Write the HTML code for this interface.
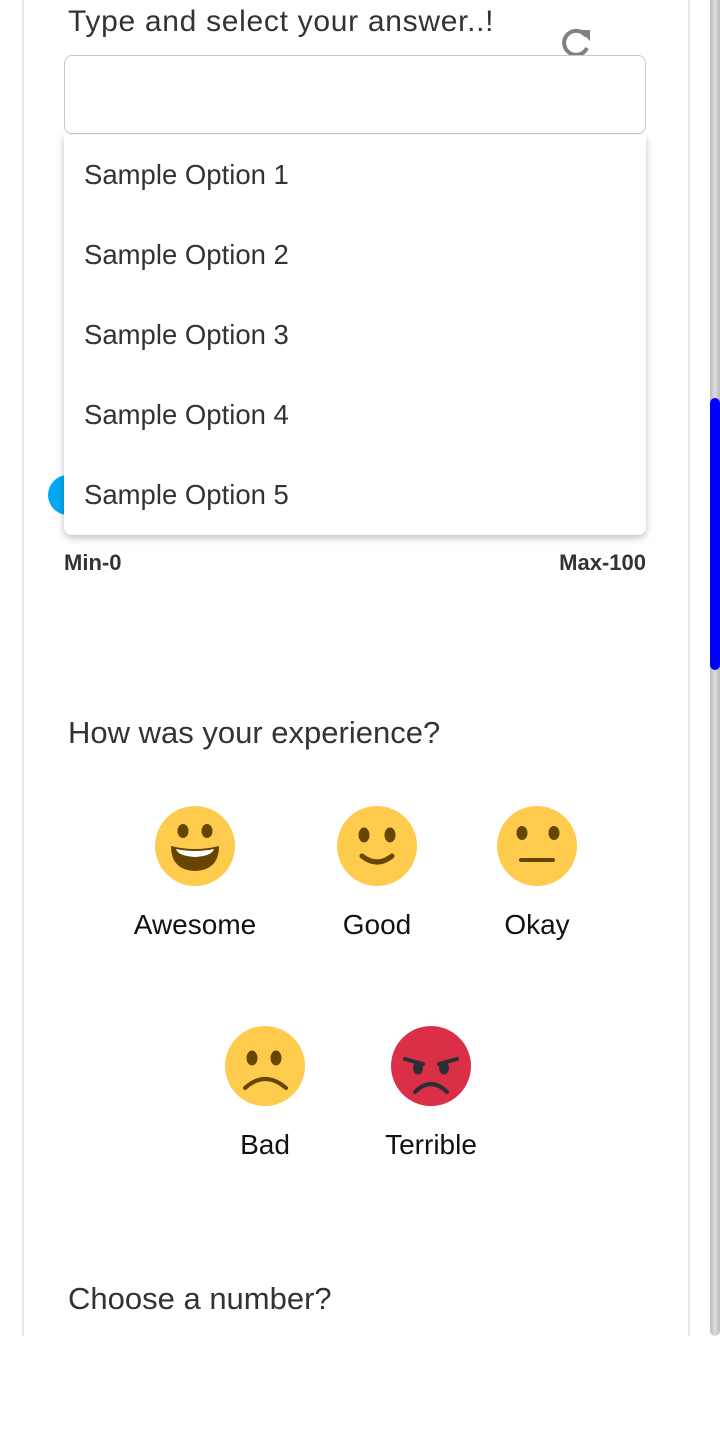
<!DOCTYPE html>
<html><head><style>
body{margin:0;width:720px;height:1448px;background:#fff;position:relative;overflow:hidden;font-family:"Liberation Sans",Roboto,sans-serif;}
.card{position:absolute;left:22px;top:-10px;width:664px;height:1346px;border-left:2px solid #e6e6e6;border-right:2px solid #e6e6e6;}
.t{position:absolute;color:#333;font-size:30px;white-space:nowrap;}
.track{position:absolute;left:710px;top:0;width:10px;height:1336px;background:linear-gradient(90deg,#bbb,#ddd,#bbb);border-radius:0 0 5px 5px;}
.thumb{position:absolute;left:710px;top:398px;width:10px;height:272px;background:#00f;border-radius:5px;}
.input{position:absolute;left:64px;top:55px;width:580px;height:77px;border:1.5px solid #c8c8c8;border-radius:8px;}
.dd{position:absolute;left:64px;top:135px;width:582px;height:400px;background:#fff;border-radius:0 0 8px 8px;box-shadow:0 3px 8px rgba(0,0,0,.25);}
.dd div{height:80px;line-height:79px;padding-left:20px;font-size:27.5px;color:#333;}
.lbl{position:absolute;font-size:28px;color:#111;text-align:center;width:160px;}
.mm{position:absolute;top:550px;font-size:22px;font-weight:bold;color:#333;}
</style></head><body>
<div class="card"></div>
<div class="t" style="left:68px;top:5px;letter-spacing:0.7px">Type and select your answer..!</div>
<svg style="position:absolute;left:557px;top:28px" width="36" height="28" viewBox="0 0 36 28"><path d="M29 8 A12 12 0 1 0 30 20" fill="none" stroke="#808080" stroke-width="4"/><path d="M22 2 L33 2 L33 13 Z" fill="#808080"/></svg>
<div class="input"></div>
<div style="position:absolute;left:48px;top:475px;width:40px;height:40px;border-radius:50%;background:#03a9f4"></div>
<div class="dd"><div>Sample Option 1</div><div>Sample Option 2</div><div>Sample Option 3</div><div>Sample Option 4</div><div>Sample Option 5</div></div>
<div class="mm" style="left:64px">Min-0</div>
<div class="mm" style="right:74px">Max-100</div>
<div class="t" style="left:68px;top:715px;font-size:31px">How was your experience?</div>
<svg style="position:absolute;left:155px;top:806px" width="80" height="80" viewBox="0 0 80 80"><circle cx="40" cy="40" r="40" fill="#ffcb4c"/><ellipse cx="28" cy="25" rx="5.5" ry="7" fill="#664500"/><ellipse cx="52" cy="25" rx="5.5" ry="7" fill="#664500"/><path d="M16 40 Q40 46 64 40 Q64 64 40 65 Q16 64 16 40Z" fill="#664500"/><path d="M21 43 Q40 47 59 43 Q57 50 40 51 Q23 50 21 43Z" fill="#fff"/></svg>
<svg style="position:absolute;left:337px;top:806px" width="80" height="80" viewBox="0 0 80 80"><circle cx="40" cy="40" r="40" fill="#ffcb4c"/><ellipse cx="27" cy="29" rx="5.5" ry="7.5" fill="#664500"/><ellipse cx="53" cy="29" rx="5.5" ry="7.5" fill="#664500"/><path d="M25 50 Q40 62 55 50" fill="none" stroke="#664500" stroke-width="5" stroke-linecap="round"/></svg>
<svg style="position:absolute;left:497px;top:806px" width="80" height="80" viewBox="0 0 80 80"><circle cx="40" cy="40" r="40" fill="#ffcb4c"/><ellipse cx="25" cy="27" rx="5.5" ry="7" fill="#664500"/><ellipse cx="57" cy="27" rx="5.5" ry="7" fill="#664500"/><path d="M24 54 H56" stroke="#664500" stroke-width="4" stroke-linecap="round"/></svg>
<div class="lbl" style="left:115px;top:909px">Awesome</div>
<div class="lbl" style="left:297px;top:909px">Good</div>
<div class="lbl" style="left:457px;top:909px">Okay</div>
<svg style="position:absolute;left:225px;top:1026px" width="80" height="80" viewBox="0 0 80 80"><circle cx="40" cy="40" r="40" fill="#ffcb4c"/><ellipse cx="27" cy="32" rx="5.5" ry="7.5" fill="#664500"/><ellipse cx="51" cy="32" rx="5.5" ry="7.5" fill="#664500"/><path d="M20 62 Q40 44 61 62" fill="none" stroke="#664500" stroke-width="4" stroke-linecap="round"/></svg>
<svg style="position:absolute;left:391px;top:1026px" width="80" height="80" viewBox="0 0 80 80"><circle cx="40" cy="40" r="40" fill="#da2f47"/><path d="M14 33 L32 38" stroke="#292f33" stroke-width="4" stroke-linecap="round"/><path d="M66 33 L48 38" stroke="#292f33" stroke-width="4" stroke-linecap="round"/><ellipse cx="27" cy="42" rx="5" ry="6.5" fill="#292f33"/><ellipse cx="53" cy="42" rx="5" ry="6.5" fill="#292f33"/><path d="M24 66 Q40 50 56 66" fill="none" stroke="#292f33" stroke-width="4" stroke-linecap="round"/></svg>
<div class="lbl" style="left:185px;top:1129px">Bad</div>
<div class="lbl" style="left:351px;top:1129px">Terrible</div>
<div class="t" style="left:68px;top:1281px;font-size:31px">Choose a number?</div>
<div class="track"></div><div class="thumb"></div>
</body></html>
